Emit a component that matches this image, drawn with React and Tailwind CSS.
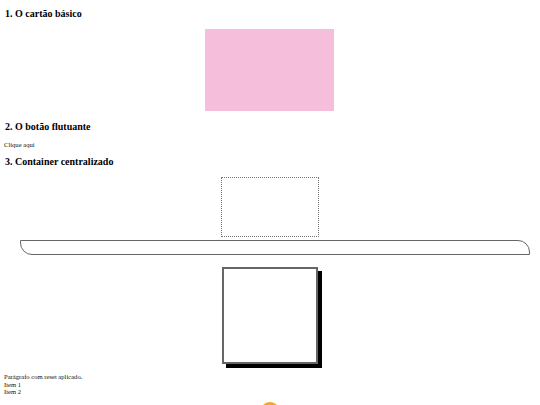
export default function App() {
  return (
    <div className="w-[540px] h-[405px] overflow-hidden bg-white text-black relative font-['Liberation_Serif','Times_New_Roman',serif]">
      <div className="flex flex-col">
        <h3 className="text-[10px] font-bold leading-[12px] mt-[8px] ml-[5px]">1. O cartão básico</h3>
        <div className="self-center w-[129px] h-[82px] bg-[#f5bedb] mt-[9px] ml-[-1px]"></div>
        <h3 className="text-[10px] font-bold leading-[12px] mt-[10px] ml-[5px]">2. O botão flutuante</h3>
        <p className="text-[6.6px] leading-[8px] mt-[8px] ml-[4px] text-[#111]">Clique aqui</p>
        <h3 className="text-[10px] font-bold leading-[12px] mt-[7px] ml-[5px]">3. Container centralizado</h3>
        <div className="self-center w-[98px] h-[60px] border border-dotted border-[#777] mt-[9px] ml-[-1px]"></div>
        <div className="mx-[20px] h-[15px] border border-[#666] rounded-tr-[12px] rounded-bl-[12px] mt-[3px] w-[510px]"></div>
        <div className="self-center w-[96px] h-[97px] border-2 border-[#666] shadow-[4px_4px_0_#000] mt-[12px] ml-[-1px]"></div>
        <div className="text-[6.6px] leading-[7.5px] mt-[9px] ml-[4px] text-[#111]">
          <p>Parágrafo com reset aplicado.</p>
          <p>Item 1</p>
          <p>Item 2</p>
        </div>
      </div>
      <div className="absolute left-[260px] top-[402px] w-[20px] h-[20px] rounded-full bg-[#f5a623]"></div>
    </div>
  );
}
